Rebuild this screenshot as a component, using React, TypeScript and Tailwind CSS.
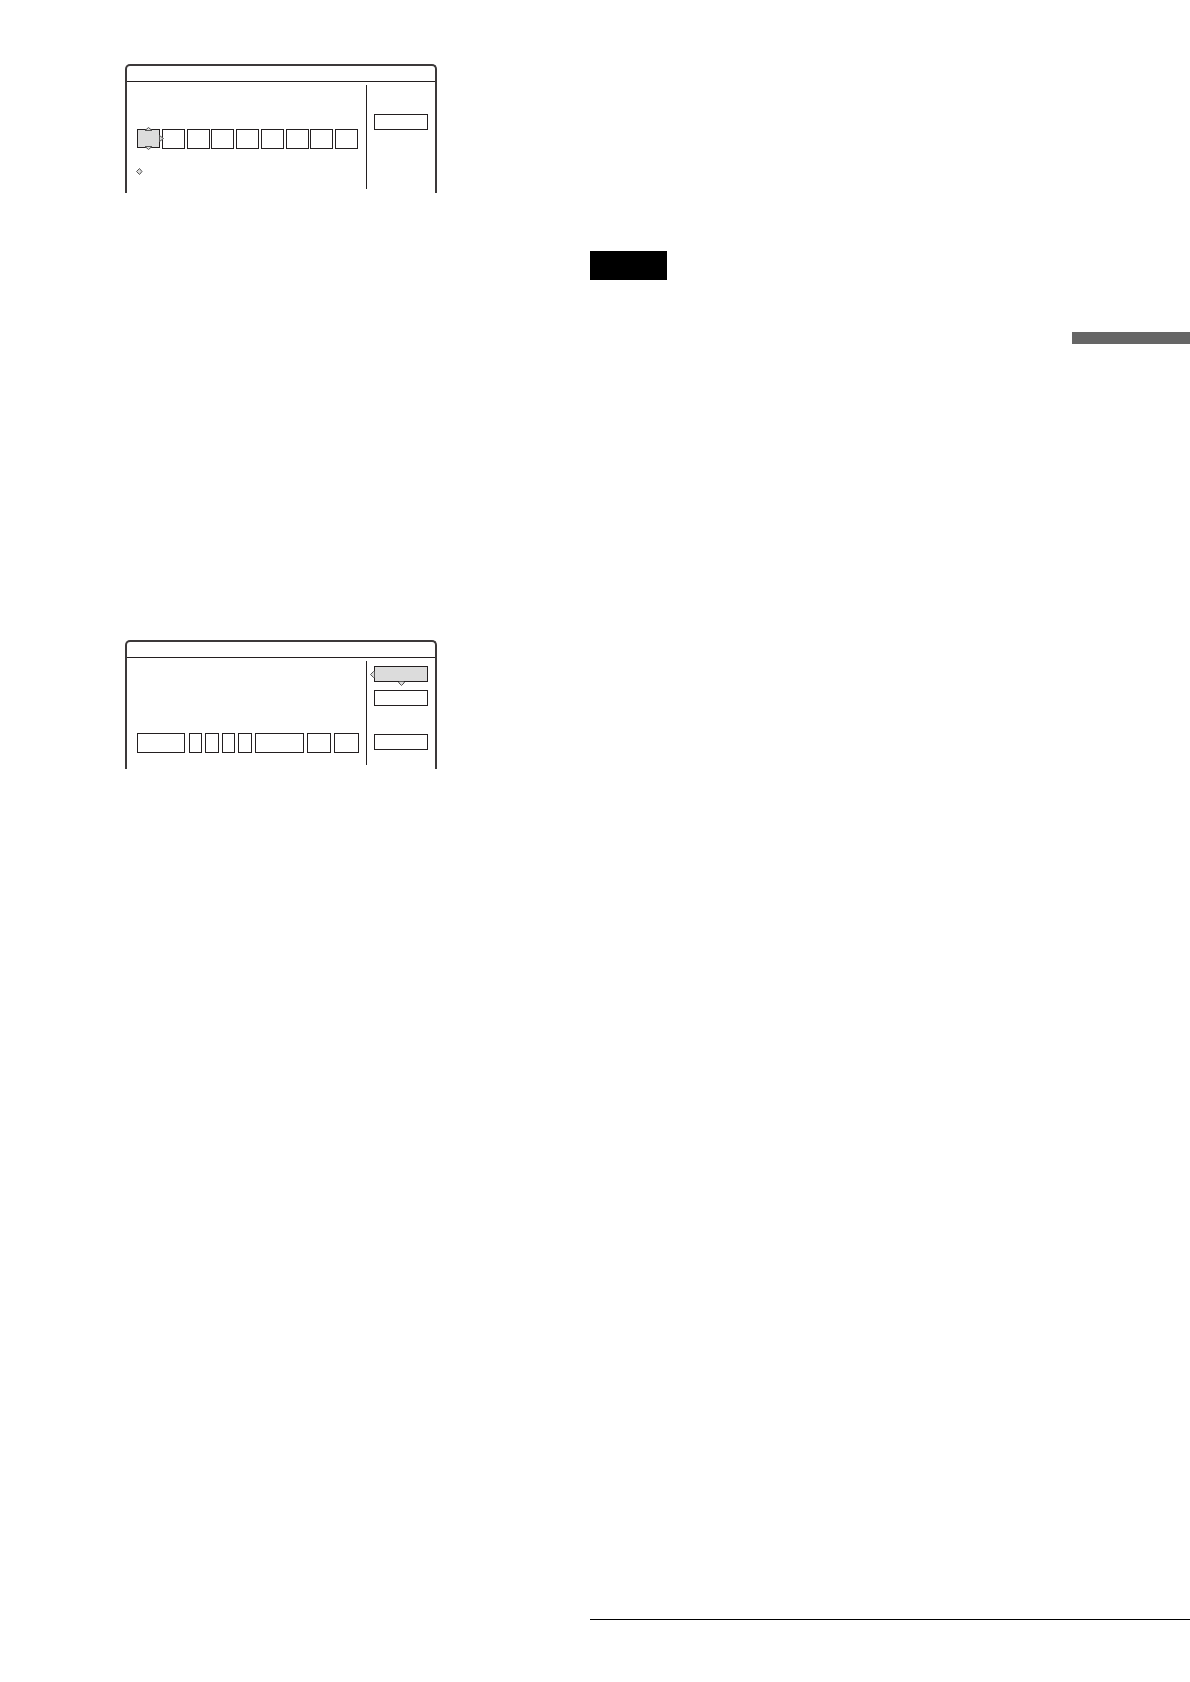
import type { ReactNode } from 'react'
import clsx from 'clsx'

const timerCells = [1, 2, 3, 4, 5, 6, 7, 8, 9]

const programCells = [
  { id: 1, width: 'w-12 mr-px' },
  { id: 2, width: 'w-[13px]' },
  { id: 3, width: 'w-[14px]' },
  { id: 4, width: 'w-[13px]' },
  { id: 5, width: 'w-[14px]' },
  { id: 6, width: 'w-[49px]' },
  { id: 7, width: 'w-6' },
  { id: 8, width: 'w-[25px]' }
]

const arrowPaths = {
  up: 'M0 3.5 L3.5 0.5 L7 3.5 Z',
  down: 'M0 0.5 L3.5 3.5 L7 0.5 Z',
  downLarge: 'M2 0.5 L0.5 1.5 L3.5 4.5 L6.5 1.5 L5 0.5 Z',
  left: 'M4.5 0.5 L3.5 0.5 L0.5 3.5 L3.5 6.5 L4.5 6.5 Z',
  right: 'M0.5 0.5 L4.5 3.5 L0.5 6.5 Z'
}

function Arrow({ direction, className }: { direction: keyof typeof arrowPaths; className: string }) {
  return (
    <svg className={clsx('absolute overflow-visible', className)} fill="#dcdcdc" stroke="#555" aria-hidden="true">
      <path d={arrowPaths[direction]} />
    </svg>
  )
}

type BoxProps = { label: string; className: string; selected?: boolean; children?: ReactNode }

function Box({ label, className, selected, children }: BoxProps) {
  return (
    <button
      type="button"
      aria-label={label}
      className={clsx('relative block shrink-0 border border-[#231f20]', selected ? 'bg-[#dcdcdc]' : 'bg-white', className)}
    >
      {children}
    </button>
  )
}

function Panel({ children, side }: { children: ReactNode; side: ReactNode }) {
  return (
    <section className="w-full max-w-[312px] rounded-t-[5px] border-2 border-b-0 border-[#3c393a]">
      <div className="h-4 border-b border-[#231f20]" />
      <div className="flex h-[111px]">
        <div className="flex-1 pl-[10px]">{children}</div>
        <div className="mt-[3px] mb-1 w-px bg-[#231f20]" />
        <div className="px-[7px]">{side}</div>
      </div>
    </section>
  )
}

export default function App() {
  return (
    <main className="grid min-h-screen grid-cols-[59fr_60fr] bg-white font-['Liberation_Sans',sans-serif]">
      <div className="flex flex-col gap-[447px] pt-16 pl-[125px]">
        <Panel side={<Box label="Side option" className="mt-8 h-4 w-[54px]" />}>
          <div className="flex w-[221px] items-start justify-between pt-[47px]">
            {timerCells.map((cell) => (
              <Box
                key={cell}
                label={`Field ${cell}`}
                selected={cell === 1}
                className={cell === 1 ? 'z-10 h-[19px] w-[23px]' : 'h-5 w-[23px]'}
              >
                {cell === 1 && (
                  <>
                    <Arrow direction="up" className="-top-[3px] left-[7px] h-1 w-[7px]" />
                    <Arrow direction="right" className="top-[5px] -right-[5px] h-[7px] w-[5px]" />
                    <Arrow direction="down" className="-bottom-[3px] left-[7px] h-1 w-[7px]" />
                  </>
                )}
              </Box>
            ))}
          </div>
          <svg className="mt-[19px] h-[7px] w-[7px] overflow-visible" fill="#dcdcdc" stroke="#555" aria-hidden="true">
            <path d="M-0.5 3.5 L2.5 0.5 L5 3.5 L2.5 6.5 Z" />
          </svg>
        </Panel>

        <Panel
          side={
            <div className="flex flex-col gap-2 pt-2">
              <Box label="Side option 1" selected className="h-4 w-[54px]">
                <Arrow direction="left" className="top-1 -left-[5px] h-[7px] w-[5px]" />
                <Arrow direction="downLarge" className="-bottom-[5px] left-[23px] h-[5px] w-[7px]" />
              </Box>
              <Box label="Side option 2" className="h-4 w-[54px]" />
              <Box label="Side option 3" className="mt-5 h-4 w-[54px]" />
            </div>
          }
        >
          <div className="flex gap-[3px] pt-[75px]">
            {programCells.map((cell) => (
              <Box key={cell.id} label={`Program field ${cell.id}`} className={clsx('h-5', cell.width)} />
            ))}
          </div>
        </Panel>
      </div>

      <div className="flex flex-col pt-[251px] pb-[62px]">
        <div className="h-[29px] w-[77px] bg-black" />
        <div className="mt-[52px] h-3 w-[118px] self-end bg-[#666]" />
        <hr className="mt-auto border-t border-black" />
      </div>
    </main>
  )
}
